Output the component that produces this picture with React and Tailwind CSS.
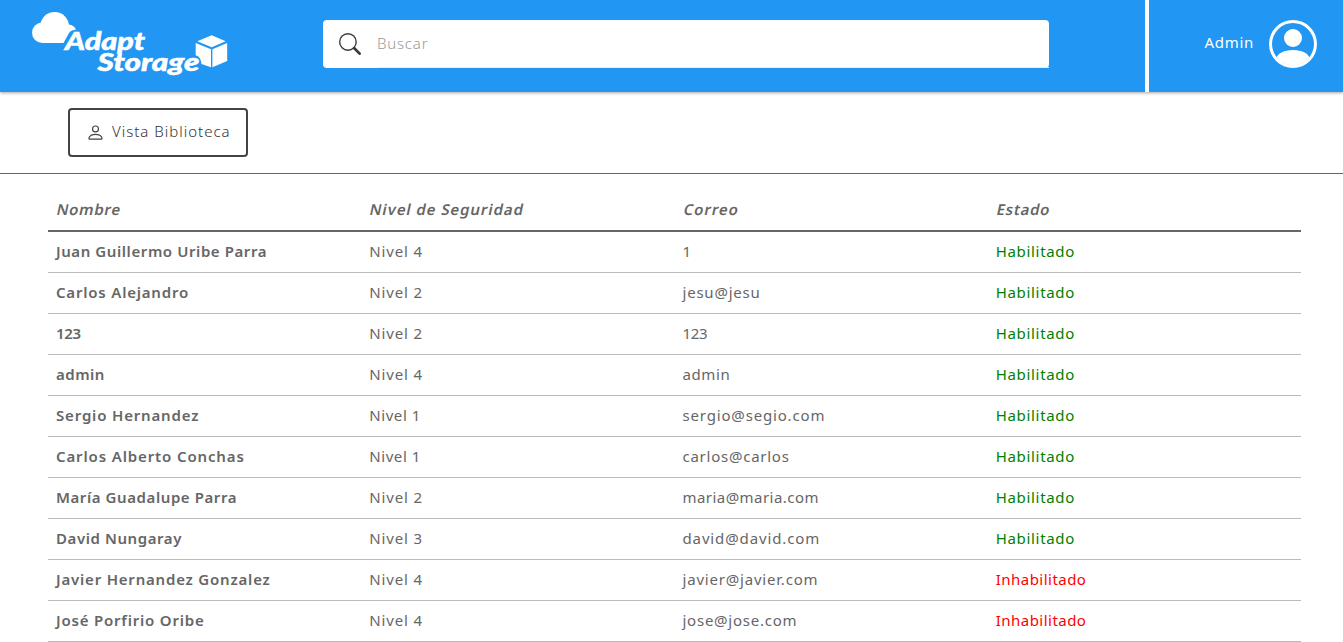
import React from "react";

const columns = [
  { label: "Nombre", track: "tracking-[0.7px]" },
  { label: "Nivel de Seguridad", track: "tracking-[0.92px]" },
  { label: "Correo", track: "tracking-[0.95px]" },
  { label: "Estado", track: "tracking-[0.7px]" },
];

const users = [
  { name: "Juan Guillermo Uribe Parra", nameTrack: "tracking-[0.58px]", level: 4, mail: "1", mailTrack: "tracking-normal", enabled: true },
  { name: "Carlos Alejandro", nameTrack: "tracking-[0.8px]", level: 2, mail: "jesu@jesu", mailTrack: "tracking-[0.78px]", enabled: true },
  { name: "123", nameTrack: "tracking-[-0.3px]", level: 2, mail: "123", mailTrack: "tracking-[-0.3px]", enabled: true },
  { name: "admin", nameTrack: "tracking-[0.5px]", level: 4, mail: "admin", mailTrack: "tracking-[0.6px]", enabled: true },
  { name: "Sergio Hernandez", nameTrack: "tracking-[0.83px]", level: 1, mail: "sergio@segio.com", mailTrack: "tracking-[0.83px]", enabled: true },
  { name: "Carlos Alberto Conchas", nameTrack: "tracking-[0.87px]", level: 1, mail: "carlos@carlos", mailTrack: "tracking-[0.75px]", enabled: true },
  { name: "María Guadalupe Parra", nameTrack: "tracking-[0.58px]", level: 2, mail: "maria@maria.com", mailTrack: "tracking-[0.45px]", enabled: true },
  { name: "David Nungaray", nameTrack: "tracking-[0.58px]", level: 3, mail: "david@david.com", mailTrack: "tracking-[0.87px]", enabled: true },
  { name: "Javier Hernandez Gonzalez", nameTrack: "tracking-[0.8px]", level: 4, mail: "javier@javier.com", mailTrack: "tracking-[0.8px]", enabled: false },
  { name: "José Porfirio Oribe", nameTrack: "tracking-[0.8px]", level: 4, mail: "jose@jose.com", mailTrack: "tracking-[0.75px]", enabled: false },
];

function Logo() {
  return (
    <svg className="ml-7 h-[92px] w-[204px] shrink-0" viewBox="28 0 204 92" fill="#fff">
      <circle cx="42.300" cy="32.700" r="10.300" />
      <circle cx="54.600" cy="26.400" r="14.400" />
      <path d="M42 43V28L66 24.500H68.600C72.500 24.800 75 27 76 29.600L72 30.500Q70 31 69 33L63.500 43Z" />
      <g fontFamily="Lato, sans-serif" fontWeight="900" fontStyle="italic" fontSize="24" stroke="#fff" strokeWidth="0.500">
        <text x="65" y="50" textLength="80" lengthAdjust="spacingAndGlyphs">Adapt</text>
        <text x="97.500" y="71" textLength="102" lengthAdjust="spacingAndGlyphs">Storage</text>
      </g>
      <path d="M211.700 35.300L225.700 41.300L211.700 47.300L197.300 41.300Z" />
      <path d="M195.700 43L211 49.300V67.300L201.500 64C201 59 199 56 195.700 55.500Z" />
      <path d="M227.200 43L212.400 49.300V67.300L227.200 61Z" />
    </svg>
  );
}

function SearchIcon() {
  return (
    <svg className="size-[22px] shrink-0" viewBox="0 0 16 16" fill="#3a3a3a" fillRule="evenodd">
      <path d="M10.442 10.442a1 1 0 011.415 0l3.850 3.850a1 1 0 01-1.414 1.415l-3.850-3.850a1 1 0 010-1.415z" />
      <path d="M6.500 12a5.500 5.500 0 100-11 5.500 5.500 0 000 11zM13 6.500a6.500 6.500 0 11-13 0 6.500 6.500 0 0113 0z" />
    </svg>
  );
}

function PersonIcon() {
  return (
    <svg className="size-[19px] shrink-0" viewBox="0 0 16 16" fill="#444" fillRule="evenodd">
      <path d="M13 14s1 0 1-1-1-4-6-4-6 3-6 4 1 1 1 1h10zM3.022 13h9.956a.274.274 0 00.014-.002l.008-.002c-.001-.246-.154-.986-.832-1.664C11.516 10.680 10.289 10 8 10c-2.290 0-3.516.680-4.168 1.332-.678.678-.830 1.418-.832 1.664a1.050 1.050 0 00.022.004zM8 7a2 2 0 100-4 2 2 0 000 4zm3-2a3 3 0 11-6 0 3 3 0 016 0z" />
    </svg>
  );
}

function AvatarIcon() {
  return (
    <svg className="size-12 shrink-0" viewBox="0 0 16 16" fill="#fff">
      <path d="M13.468 12.370C12.758 11.226 11.195 10 8 10s-4.757 1.225-5.468 2.370A6.987 6.987 0 008 15.200a6.987 6.987 0 005.468-2.830z" />
      <path d="M8 9a3 3 0 100-6 3 3 0 000 6z" />
      <path fillRule="evenodd" d="M8 1a7 7 0 100 14A7 7 0 008 1zM0 8a8 8 0 1116 0A8 8 0 010 8z" />
    </svg>
  );
}

export default function App() {
  return (
    <div className="h-[642px] overflow-hidden bg-white font-['Noto_Sans',sans-serif] text-[15px] text-[#666]">
      <header className="flex h-[92px] bg-[#2196f3] shadow-[0_1px_3px_rgba(0,0,0,0.35)]">
        <Logo />
        <div className="mt-5 ml-[91px] flex h-12 w-[726px] items-center rounded bg-white pl-4">
          <SearchIcon />
          <div className="ml-4 flex h-12 flex-1 items-center border-b border-[#eee] font-light tracking-[0.8px] text-[#999]">Buscar</div>
        </div>
        <div className="ml-24 w-1 bg-white" />
        <div className="flex flex-1 items-center justify-end pr-[26px] pb-1 text-white">
          <span className="mr-[15px] pb-1 tracking-[0.7px]">Admin</span>
          <AvatarIcon />
        </div>
      </header>
      <div className="flex h-[82px] border-b border-[#666] pt-4 pl-[68px]">
        <button className="flex h-[49px] w-[180px] items-center rounded border-2 border-[#444] pl-4 font-light text-[#333]">
          <PersonIcon />
          <span className="ml-[7px] pb-0.5 tracking-[1px]">Vista Biblioteca</span>
        </button>
      </div>
      <table className="mt-4 ml-12 w-[1253px] table-fixed border-separate border-spacing-0 text-left">
        <thead>
          <tr className="h-[42px]">
            {columns.map((c) => (
              <th key={c.label} className="border-b-2 border-[#666] pt-0 pr-2 pb-0.5 pl-[9px] font-semibold">
                <span className={`inline-block -skew-x-12 ${c.track}`}>{c.label}</span>
              </th>
            ))}
          </tr>
        </thead>
        <tbody>
          {users.map((u) => (
            <tr key={u.name} className="h-[41px] *:border-b *:border-[#bbb] *:px-2 *:pt-0 *:pb-0.5">
              <td className={`font-semibold ${u.nameTrack}`}>{u.name}</td>
              <td className={u.level === 1 ? "tracking-[0.57px]" : "tracking-[0.85px]"}>Nivel {u.level}</td>
              <td className={u.mailTrack}>{u.mail}</td>
              <td className={u.enabled ? "tracking-[0.67px] text-[green]" : "tracking-[0.47px] text-[red]"}>
                {u.enabled ? "Habilitado" : "Inhabilitado"}
              </td>
            </tr>
          ))}
        </tbody>
      </table>
    </div>
  );
}
